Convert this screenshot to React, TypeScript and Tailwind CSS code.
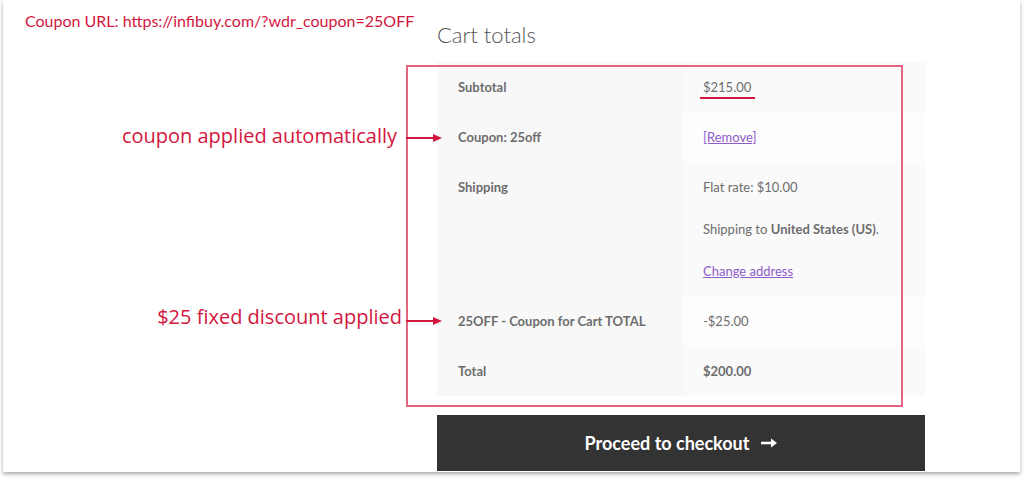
import React from 'react';

const RED = 'text-[#d3163e]';
const NOTE = { fontFamily: '"Open Sans", Lato, sans-serif' };

function Arrow() {
  return (
    <svg width="36" height="10" viewBox="0 0 36 10" className="block">
      <line x1="0" y1="5" x2="28" y2="5" stroke="#d3163e" strokeWidth="2" />
      <polygon points="27,1 36,5 27,9" fill="#d3163e" />
    </svg>
  );
}

function Row({ label, children, odd, h = 'h-[50px]' }: { label: string; children: React.ReactNode; odd?: boolean; h?: string }) {
  return (
    <div className={`grid grid-cols-[246px_242px] ${h}`}>
      <div className="bg-[#f8f8f8] pl-[21px] pt-[15px] font-bold text-[#6d6d6d]">{label}</div>
      <div className={`${odd ? 'bg-[#fafafa]' : 'bg-[#fdfdfd]'} pl-[20px] pt-[15px] text-[#6d6d6d]`}>{children}</div>
    </div>
  );
}

export default function App() {
  return (
    <div className="w-[1024px] h-[481px] bg-white overflow-hidden" style={{ fontFamily: 'Lato, "Open Sans", sans-serif' }}>
      <div className="relative ml-[3px] w-[1017px] h-[472px] bg-white shadow-[0_2px_4px_rgba(0,0,0,0.35)] flex">
        {/* left: coupon url */}
        <div className="w-[434px] shrink-0">
          <p className={`pl-[22px] pt-[10px] text-[16px] leading-[22px] ${RED}`}>
            Coupon URL: https://infibuy.com/?wdr_coupon=25OFF
          </p>
        </div>

        {/* right: cart totals */}
        <div className="w-[488px] flex flex-col text-[13px] leading-[20px]">
          <h2 className="pt-[21px] h-[62px] text-[22px] leading-[28px] text-[#555] font-light">Cart totals</h2>
          <div>
            <Row label="Subtotal" odd>
              <span>$215.00</span>
            </Row>
            <Row label="Coupon: 25off">
              <a className="text-[#8e5cc9] underline">[Remove]</a>
            </Row>
            <Row label="Shipping" odd h="h-[134px]">
              <div className="flex flex-col gap-[22px]">
                <span>Flat rate: $10.00</span>
                <span>
                  Shipping to <b>United States (US)</b>.
                </span>
                <a className="text-[#8e5cc9] underline">Change address</a>
              </div>
            </Row>
            <Row label="25OFF - Coupon for Cart TOTAL">
              <span>-$25.00</span>
            </Row>
            <Row label="Total" odd>
              <b>$200.00</b>
            </Row>
          </div>
          <button className="mt-[19px] h-[56px] w-full bg-[#333333] text-white text-[18px] font-bold flex items-center justify-center gap-[12px]">
            Proceed to checkout
            <svg width="16" height="10" viewBox="0 0 16 10">
              <line x1="0" y1="5" x2="11" y2="5" stroke="white" strokeWidth="2.6" />
              <polygon points="10,0.5 16,5 10,9.5" fill="white" />
            </svg>
          </button>
        </div>

        {/* annotation overlays */}
        <div className="absolute left-[403px] top-[65px] w-[497px] h-[342px] border-2 border-[#e4657f] pointer-events-none" />
        <div className="absolute left-[697px] top-[97px] w-[55px] h-[2px] bg-[#d3163e]" />
        <span style={NOTE} className={`absolute right-[623px] top-[122px] text-[20px] leading-[28px] ${RED}`}>
          coupon applied automatically
        </span>
        <div className="absolute left-[403px] top-[133px]"><Arrow /></div>
        <span style={NOTE} className={`absolute right-[618px] top-[303px] text-[20px] leading-[28px] ${RED}`}>
          $25 fixed discount applied
        </span>
        <div className="absolute left-[403px] top-[316px]"><Arrow /></div>
      </div>
    </div>
  );
}
